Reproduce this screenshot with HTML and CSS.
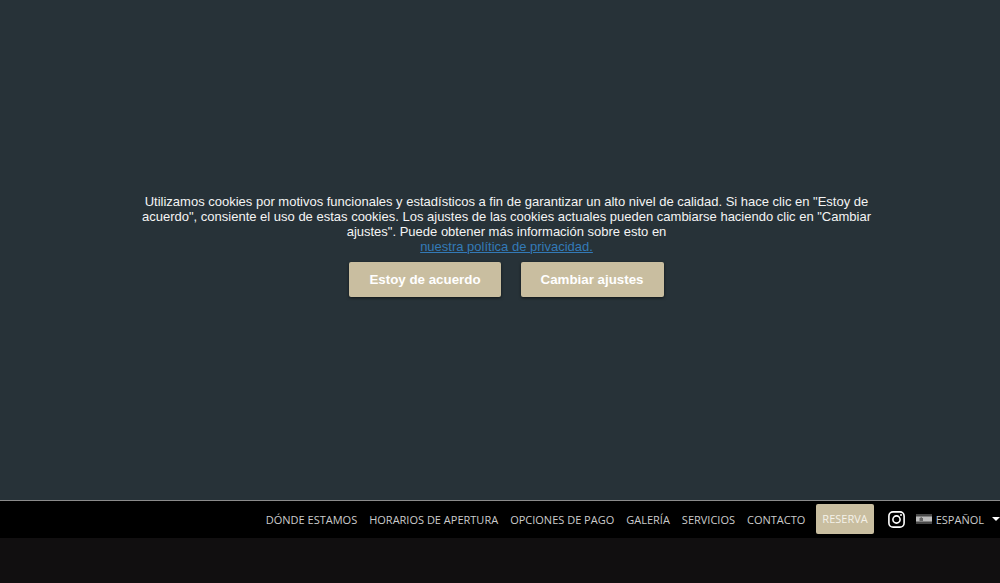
FILE: index.html
```html
<!DOCTYPE html>
<html lang="es">
<head>
<meta charset="utf-8">
<meta name="viewport" content="width=device-width, initial-scale=1">
<title>Cookies</title>
<link rel="stylesheet" href="styles.css">
</head>
<body>
<section class="consent">
  <div class="consent-body">
    <p class="consent-text">Utilizamos cookies por motivos funcionales y estadísticos a fin de garantizar un alto nivel de calidad. Si hace clic en "Estoy de acuerdo", consiente el uso de estas cookies. Los ajustes de las cookies actuales pueden cambiarse haciendo clic en "Cambiar ajustes". Puede obtener más información sobre esto en<br><a class="consent-link" href="#">nuestra política de privacidad.</a></p>
    <div class="consent-actions">
      <button class="consent-button" type="button">Estoy de acuerdo</button>
      <button class="consent-button" type="button">Cambiar ajustes</button>
    </div>
  </div>
</section>
<header class="navbar">
  <nav class="menu">
    <a class="menu-link" href="#">DÓNDE ESTAMOS</a>
    <a class="menu-link" href="#">HORARIOS DE APERTURA</a>
    <a class="menu-link" href="#">OPCIONES DE PAGO</a>
    <a class="menu-link" href="#">GALERÍA</a>
    <a class="menu-link" href="#">SERVICIOS</a>
    <a class="menu-link" href="#">CONTACTO</a>
  </nav>
  <a class="reserve" href="#">RESERVA</a>
  <a class="social" href="#" aria-label="Instagram">
    <svg width="17" height="17" viewBox="0 0 17 17" fill="none" stroke="#fff">
      <rect x="0.9" y="0.9" width="15.2" height="15.2" rx="4.2" stroke-width="1.6"/>
      <circle cx="8.5" cy="8.5" r="3.6" stroke-width="1.6"/>
      <circle cx="13" cy="4" r="1" fill="#fff" stroke="none"/>
    </svg>
  </a>
  <button class="language" type="button">
    <svg width="16" height="10" viewBox="0 0 16 10">
      <path fill="#484848" d="M0 0h16v10H0z"/>
      <path fill="#bdbdbd" d="M0 2.5h16v5H0z"/>
      <path fill="#666" d="M3.5 4h1V3.3h1.5V4h1v3h-3.5z"/>
    </svg>
    <span>ESPAÑOL</span>
    <svg class="caret" width="8" height="4" viewBox="0 0 8 4"><path fill="#fff" d="M0 0h8L4 4z"/></svg>
  </button>
</header>
<main class="hero"></main>
</body>
</html>
```
FILE: styles.css
```css
* {
  box-sizing: border-box;
}

body {
  display: flex;
  flex-direction: column;
  min-height: 100vh;
  margin: 0;
  overflow-x: hidden;
  background: #110f10;
  font-family: "Open Sans", sans-serif;
  font-size: 11px;
}

.consent {
  display: flex;
  justify-content: center;
  padding: 194px 112px 203px 125px;
  border-bottom: 1px solid #8b8b8b;
  background: #273238;
  font-family: "Liberation Sans", Arial, sans-serif;
}

.consent-body {
  max-width: 763px;
  text-align: center;
}

.consent-text {
  margin: 0;
  color: #f4f4f4;
  font-size: 13px;
  line-height: 15px;
}

.consent-link {
  color: #337ab7;
}

.consent-actions {
  display: flex;
  justify-content: center;
  gap: 20px;
  margin-top: 8px;
}

.consent-button {
  padding: 10px 20px;
  border: 0;
  border-radius: 2px;
  background: #c9bea0;
  box-shadow: 0 1px 3px rgba(0, 0, 0, 0.6);
  color: #fff;
  font-family: inherit;
  font-weight: bold;
  line-height: 15px;
}

.navbar {
  display: flex;
  align-items: center;
  justify-content: flex-end;
  padding: 3px 0 4px;
  background: #000;
  white-space: nowrap;
}

.menu {
  display: flex;
  gap: 12px;
}

.menu-link {
  color: #ccc;
  text-decoration: none;
}

.reserve {
  margin-left: 11px;
  padding: 0 6px;
  border-radius: 2px;
  background: #c9bea0;
  color: #f5f2e9;
  line-height: 30px;
  text-decoration: none;
}

.social {
  display: flex;
  margin-left: 14px;
}

.language {
  display: flex;
  align-items: center;
  gap: 4px;
  margin-left: 11px;
  padding: 0;
  border: 0;
  background: none;
  color: #ccc;
  font: inherit;
}

.caret {
  margin-left: 4px;
}

.hero {
  flex: 1;
  background: #110f10;
}
```
